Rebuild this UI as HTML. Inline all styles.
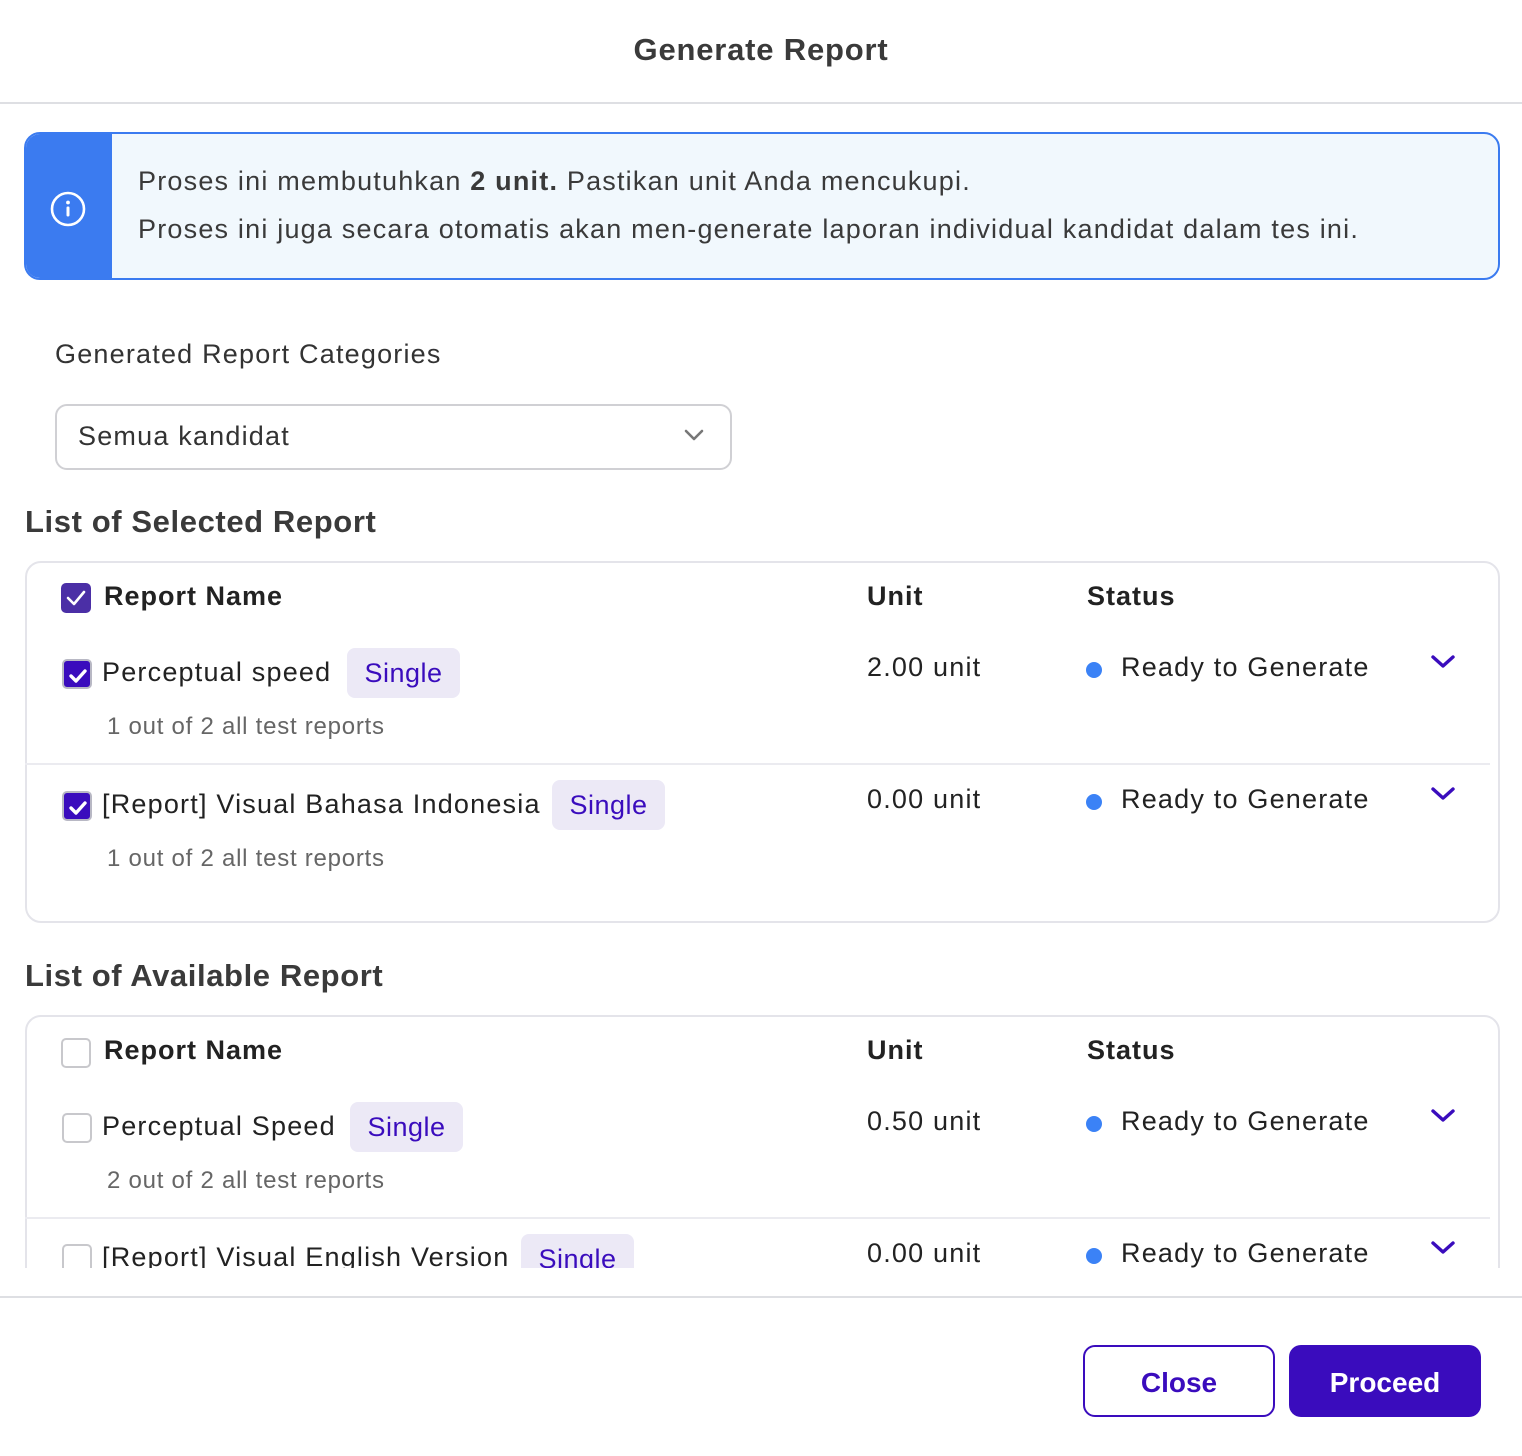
<!DOCTYPE html>
<html><head><meta charset="utf-8"><style>
*{margin:0;padding:0;box-sizing:border-box}
body{width:1522px;height:1456px;background:#fff;font-family:"Liberation Sans",sans-serif;position:relative;overflow:hidden;color:#222}
.a{position:absolute;white-space:nowrap;line-height:1}
.t27{font-size:27px;letter-spacing:1.2px}
.sub{font-size:24px;color:#666;letter-spacing:0.75px}
.hd{font-size:27px;font-weight:700;color:#222;letter-spacing:1px}
.h2{font-size:31px;font-weight:700;color:#3a3a3a;letter-spacing:0.6px}
.cb{position:absolute;width:30px;height:30px;border-radius:5px}
.cb.on{background:#3a0cbd;border:2px solid #b8b8c4}
.cb.hon{background:#4b2fa6;border:none}
.cb.off{background:#fff;border:2px solid #c8c8cc}
.cb svg{position:absolute;left:4px;top:5px}
.badge{position:absolute;height:50px;background:#ece9f6;border-radius:8px;color:#3a0cbd;font-size:27px;line-height:50px;text-align:center;letter-spacing:0.5px}
.dot{position:absolute;width:16px;height:16px;border-radius:50%;background:#3b82f6}
.chev{position:absolute}
.card{position:absolute;left:25px;width:1475px;border:2px solid #e4e4ea;border-radius:16px}
.div{position:absolute;left:25px;width:1465px;height:2px;background:#ebebf0}
</style></head><body>

<div class="a" style="left:0;width:1522px;text-align:center;top:34px;font-size:31px;font-weight:700;color:#3a3a3a;letter-spacing:0.8px">Generate Report</div>
<div style="position:absolute;left:0;top:102px;width:1522px;height:2px;background:#dedfe3"></div>

<div style="position:absolute;left:24px;top:132px;width:1476px;height:148px;border:2px solid #3b7bf0;border-radius:16px;background:#f1f8fd;overflow:hidden">
  <div style="position:absolute;left:-2px;top:-2px;width:88px;height:148px;background:#3b7bf0"></div>
  <svg style="position:absolute;left:24px;top:57px" width="36" height="36" viewBox="0 0 36 36"><circle cx="18" cy="18" r="16" fill="none" stroke="#fff" stroke-width="2.6"/><circle cx="18" cy="11.5" r="1.9" fill="#fff"/><rect x="16.5" y="15.5" width="3" height="10" rx="1.2" fill="#fff"/></svg>
</div>
<div class="a t27" style="left:138px;top:168px;color:#3a3a3a">Proses ini membutuhkan <b>2 unit.</b> Pastikan unit Anda mencukupi.</div>
<div class="a t27" style="left:138px;top:216px;color:#3a3a3a">Proses ini juga secara otomatis akan men-generate laporan individual kandidat dalam tes ini.</div>

<div class="a t27" style="left:55px;top:341px;color:#333">Generated Report Categories</div>
<div style="position:absolute;left:55px;top:404px;width:677px;height:66px;border:2px solid #d0d0d4;border-radius:12px"></div>
<div class="a t27" style="left:78px;top:423px;color:#333">Semua kandidat</div>
<svg style="position:absolute;left:683px;top:428px" width="22" height="14" viewBox="0 0 22 14"><path d="M3 3 L11 11 L19 3" fill="none" stroke="#777" stroke-width="2.6" stroke-linecap="round" stroke-linejoin="round"/></svg>

<div class="a h2" style="left:25px;top:506px">List of Selected Report</div>

<div class="card" style="top:561px;height:362px"></div>
<div class="cb hon" style="left:61px;top:583px"><svg width="22" height="20" viewBox="0 0 22 20"><path d="M3 10 L9 16 L19 4" fill="none" stroke="#fff" stroke-width="2.6" stroke-linecap="round" stroke-linejoin="round"/></svg></div>
<div class="a hd" style="left:104px;top:583px">Report Name</div>
<div class="a hd" style="left:867px;top:583px">Unit</div>
<div class="a hd" style="left:1087px;top:583px">Status</div>

<div class="cb on" style="left:62px;top:659px"><svg width="22" height="20" viewBox="0 0 22 20"><path d="M3 10 L8 15 L17 5" fill="none" stroke="#fff" stroke-width="3.4" stroke-linecap="round" stroke-linejoin="round"/></svg></div>
<div class="a t27" style="left:102px;top:659px">Perceptual speed</div>
<div class="badge" style="left:347px;top:648px;width:113px">Single</div>
<div class="a sub" style="left:107px;top:715px">1 out of 2 all test reports</div>
<div class="a t27" style="left:867px;top:654px">2.00 unit</div>
<div class="dot" style="left:1086px;top:662px"></div>
<div class="a t27" style="left:1121px;top:654px">Ready to Generate</div>
<svg class="chev" style="left:1430px;top:654px" width="26" height="16" viewBox="0 0 26 16"><path d="M3 3 L13 12 L23 3" fill="none" stroke="#3a0cbd" stroke-width="3.4" stroke-linecap="round" stroke-linejoin="round"/></svg>
<div class="div" style="top:763px"></div>

<div class="cb on" style="left:62px;top:791px"><svg width="22" height="20" viewBox="0 0 22 20"><path d="M3 10 L8 15 L17 5" fill="none" stroke="#fff" stroke-width="3.4" stroke-linecap="round" stroke-linejoin="round"/></svg></div>
<div class="a t27" style="left:102px;top:791px">[Report] Visual Bahasa Indonesia</div>
<div class="badge" style="left:552px;top:780px;width:113px">Single</div>
<div class="a sub" style="left:107px;top:847px">1 out of 2 all test reports</div>
<div class="a t27" style="left:867px;top:786px">0.00 unit</div>
<div class="dot" style="left:1086px;top:794px"></div>
<div class="a t27" style="left:1121px;top:786px">Ready to Generate</div>
<svg class="chev" style="left:1430px;top:786px" width="26" height="16" viewBox="0 0 26 16"><path d="M3 3 L13 12 L23 3" fill="none" stroke="#3a0cbd" stroke-width="3.4" stroke-linecap="round" stroke-linejoin="round"/></svg>

<div class="a h2" style="left:25px;top:960px">List of Available Report</div>

<div style="position:absolute;left:0;top:1000px;width:1522px;height:268px;overflow:hidden">
  <div class="card" style="top:15px;height:400px"></div>
  <div class="cb off" style="left:61px;top:38px"></div>
  <div class="a hd" style="left:104px;top:37px">Report Name</div>
  <div class="a hd" style="left:867px;top:37px">Unit</div>
  <div class="a hd" style="left:1087px;top:37px">Status</div>

  <div class="cb off" style="left:62px;top:113px"></div>
  <div class="a t27" style="left:102px;top:113px">Perceptual Speed</div>
  <div class="badge" style="left:350px;top:102px;width:113px">Single</div>
  <div class="a sub" style="left:107px;top:169px">2 out of 2 all test reports</div>
  <div class="a t27" style="left:867px;top:108px">0.50 unit</div>
  <div class="dot" style="left:1086px;top:116px"></div>
  <div class="a t27" style="left:1121px;top:108px">Ready to Generate</div>
  <svg class="chev" style="left:1430px;top:108px" width="26" height="16" viewBox="0 0 26 16"><path d="M3 3 L13 12 L23 3" fill="none" stroke="#3a0cbd" stroke-width="3.4" stroke-linecap="round" stroke-linejoin="round"/></svg>
  <div class="div" style="top:217px"></div>

  <div class="cb off" style="left:62px;top:244px"></div>
  <div class="a t27" style="left:102px;top:244px">[Report] Visual English Version</div>
  <div class="badge" style="left:521px;top:234px;width:113px">Single</div>
  <div class="a t27" style="left:867px;top:240px">0.00 unit</div>
  <div class="dot" style="left:1086px;top:248px"></div>
  <div class="a t27" style="left:1121px;top:240px">Ready to Generate</div>
  <svg class="chev" style="left:1430px;top:240px" width="26" height="16" viewBox="0 0 26 16"><path d="M3 3 L13 12 L23 3" fill="none" stroke="#3a0cbd" stroke-width="3.4" stroke-linecap="round" stroke-linejoin="round"/></svg>
</div>

<div style="position:absolute;left:0;top:1296px;width:1522px;height:2px;background:#dedfe3"></div>
<div style="position:absolute;left:1083px;top:1345px;width:192px;height:72px;border:2px solid #3a0cbd;border-radius:12px;color:#3a0cbd;font-size:28px;font-weight:700;text-align:center;line-height:72px">Close</div>
<div style="position:absolute;left:1289px;top:1345px;width:192px;height:72px;background:#3a0cbd;border-radius:12px;color:#fff;font-size:28px;font-weight:700;text-align:center;line-height:76px">Proceed</div>
</body></html>
